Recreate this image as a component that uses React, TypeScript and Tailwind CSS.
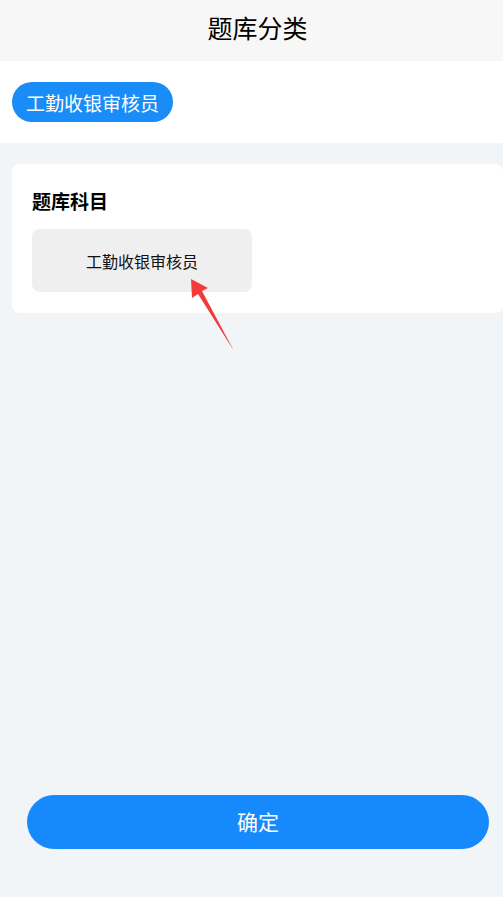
import React from 'react';

const subjects = ['工勤收银审核员'];

export default function App() {
  return (
    <div
      className="relative min-h-[897px] flex flex-col bg-[#f2f5f8]"
      style={{ fontFamily: '"Noto Sans CJK SC", "Noto Sans", sans-serif' }}
    >
      {/* Title bar */}
      <div className="h-[61px] flex items-center justify-center bg-[#f7f7f7] pl-[12px] pb-[6px]">
        <h1 className="text-[25px] text-black leading-none">题库分类</h1>
      </div>

      {/* Category tabs */}
      <div className="h-[82px] bg-white flex items-center px-3">
        <span className="h-[40px] px-[14px] flex items-center rounded-full bg-[#1a8cf8] text-white text-[19px] leading-none">
          工勤收银审核员
        </span>
      </div>

      {/* Subjects card */}
      <div className="ml-3 mt-[21px] bg-white rounded-[8px] h-[149px] pl-5 pt-[27px]">
        <h2 className="text-[19px] font-bold text-black leading-none">题库科目</h2>
        <div className="mt-[19px] flex gap-3">
          {subjects.map((s) => (
            <div
              key={s}
              className="w-[220px] h-[63px] rounded-[8px] bg-[#efefef] flex items-center justify-center text-[16px] text-[#111]"
            >
              {s}
            </div>
          ))}
        </div>
      </div>

      <div className="flex-1" />

      {/* Confirm */}
      <div className="pl-[27px] pr-[14px] pb-[48px]">
        <button className="w-full h-[54px] rounded-full bg-[#1689fd] text-white text-[21px]">确定</button>
      </div>

      {/* annotation arrow */}
      <svg className="absolute left-0 top-0 pointer-events-none" width="503" height="897">
        <polygon points="191,279 208,288 202,291 234,351 198,294 192,298" fill="#f23b3b" />
      </svg>
    </div>
  );
}
